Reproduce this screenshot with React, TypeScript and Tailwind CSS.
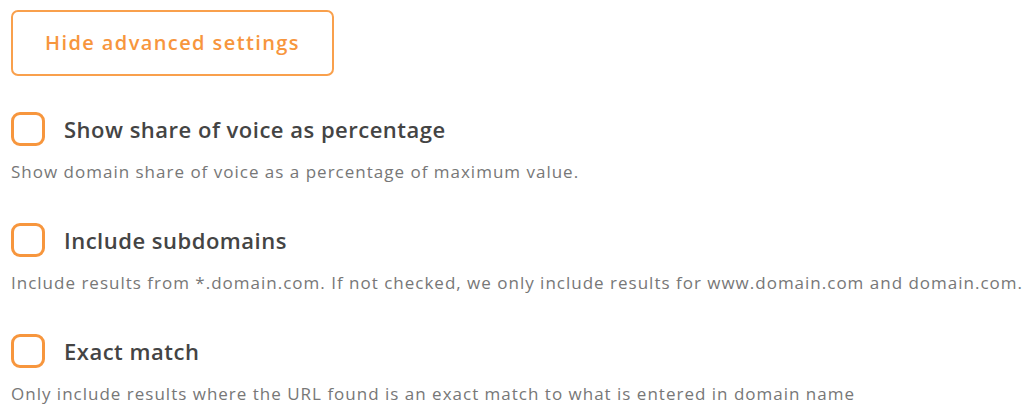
import React from "react";

const items = [
  {
    title: "Show share of voice as percentage",
    desc: "Show domain share of voice as a percentage of maximum value.",
  },
  {
    title: "Include subdomains",
    desc: "Include results from *.domain.com. If not checked, we only include results for www.domain.com and domain.com.",
  },
  {
    title: "Exact match",
    desc: "Only include results where the URL found is an exact match to what is entered in domain name",
  },
];

export default function App() {
  return (
    <div className="w-[1024px] h-[409px] bg-white overflow-hidden pl-[11px] pt-[10px]">
      <button className="w-[323px] h-[66px] rounded-[7px] border-2 border-[#f9a04c] bg-white text-[#f7963d] text-[20px] font-semibold [font-family:'Open_Sans',sans-serif] tracking-[1.4px]">
        Hide advanced settings
      </button>
      <div className="mt-[36px] flex flex-col gap-[39px]">
        {items.map((it) => (
          <div key={it.title}>
            <div className="flex items-center gap-[19px] h-[34px]">
              <div className="w-[34px] h-[34px] rounded-[9px] border-[3px] border-[#f7963d] box-border shrink-0" />
              <div className="text-[22px] font-semibold text-[#444444] [font-family:'Open_Sans',sans-serif] leading-none tracking-[0.5px]">
                {it.title}
              </div>
            </div>
            <div className="mt-[14px] text-[17px] leading-[24px] text-[#777777] [font-family:'Open_Sans',sans-serif] whitespace-nowrap tracking-[1px]">
              {it.desc}
            </div>
          </div>
        ))}
      </div>
    </div>
  );
}
